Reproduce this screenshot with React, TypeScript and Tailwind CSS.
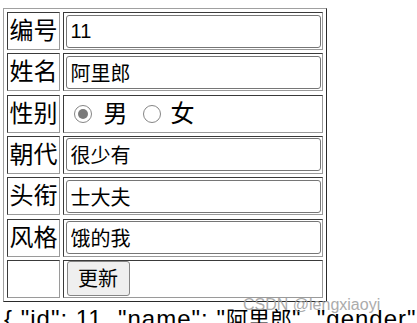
import React from "react";

const labelCell =
  "flex items-center justify-center border border-t-[#3a3a3a] border-l-[#3a3a3a] border-r-[#9a9a9a] border-b-[#9a9a9a] text-[24px] leading-none text-black";
const valueCell =
  "flex items-center border border-t-[#3a3a3a] border-l-[#3a3a3a] border-r-[#9a9a9a] border-b-[#9a9a9a] px-[1.5px]";

function TextRow({ label, value }: { label: string; value: string }) {
  return (
    <>
      <div className={labelCell}>{label}</div>
      <div className={valueCell}>
        <input
          readOnly
          value={value}
          className="w-full h-[33px] border border-[#767676] rounded-[3px] px-[4px] text-[20px] text-black bg-white outline-none"
        />
      </div>
    </>
  );
}

function Radio({ checked }: { checked?: boolean }) {
  return (
    <span className="flex h-[18px] w-[18px] shrink-0 items-center justify-center rounded-full border-[1.5px] border-[#858585] bg-white">
      {checked ? <span className="h-[10px] w-[10px] rounded-full bg-[#7a7a7a]" /> : null}
    </span>
  );
}

function Zh({ children }: { children: React.ReactNode }) {
  return <span className="text-[22px] tracking-normal">{children}</span>;
}

export default function App() {
  return (
    <div className="relative h-[323px] w-[417px] overflow-hidden bg-white font-['Liberation_Sans','Noto_Sans_CJK_SC',sans-serif] text-black">
      <div className="pl-[3px] pt-[8px]">
        <div className="grid w-[324px] grid-cols-[53px_260px] grid-rows-[38px_38px_38px_38px_38px_38px_38px] gap-x-[3px] gap-y-[3.33px] border border-t-[#a0a0a0] border-l-[#a0a0a0] border-r-[#2a2a2a] border-b-[#2a2a2a] p-[3px]">
          <TextRow label="编号" value="11" />
          <TextRow label="姓名" value="阿里郎" />
          <div className={labelCell}>性别</div>
          <div className={valueCell + " text-[24px] leading-none"}>
            <span className="ml-[8px]">
              <Radio checked />
            </span>
            <span className="ml-[12px]">男</span>
            <span className="ml-[15px]">
              <Radio />
            </span>
            <span className="ml-[10px]">女</span>
          </div>
          <TextRow label="朝代" value="很少有" />
          <TextRow label="头衔" value="士大夫" />
          <TextRow label="风格" value="饿的我" />
          <div className={labelCell}></div>
          <div className={valueCell}>
            <button className="ml-[1px] h-[35px] w-[63px] rounded-[3px] border border-[#858585] bg-[#efefef] text-[20px] text-black">
              更新
            </button>
          </div>
        </div>
      </div>
      <div className="whitespace-nowrap pl-[4px] pt-[3px] text-[24px] leading-[28px] tracking-[1px]">
        {'{ "id": 11, "name": "'}
        <Zh>阿里郎</Zh>
        {'", "gender": "'}
        <Zh>男</Zh>
        {'", "dynasty": "'}
        <Zh>很少有</Zh>
        {'" }'}
      </div>
      <div className="absolute left-[243px] top-[295px] text-[16px] leading-[20px] text-[#a3a3a3] opacity-90">
        CSDN @lengxiaoyi
      </div>
    </div>
  );
}
